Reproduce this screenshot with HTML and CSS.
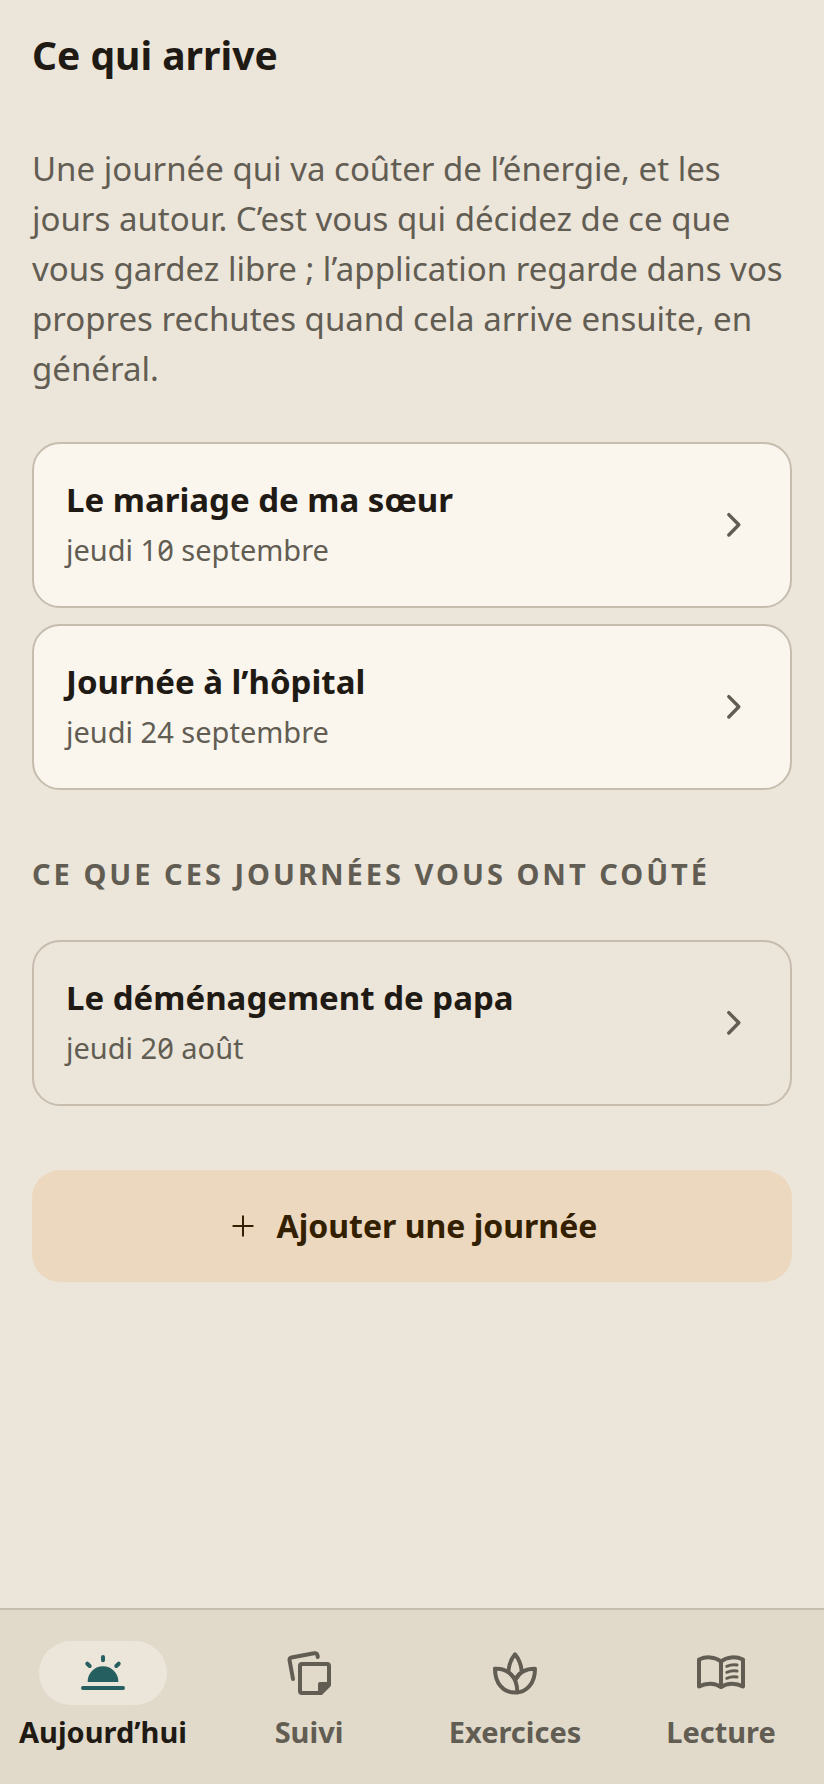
FILE: index.html
```html
<!DOCTYPE html>
<html lang="fr">
<head>
  <meta charset="UTF-8">
  <meta name="viewport" content="width=device-width, initial-scale=1.0">
  <title>Ce qui arrive</title>
  <link rel="stylesheet" href="styles.css">
</head>
<body>
  <main class="page">
    <h1>Ce qui arrive</h1>

    <p class="intro">Une journée qui va coûter de l’énergie, et les jours autour. C’est vous qui décidez de ce que vous gardez libre ; l’application regarde dans vos propres rechutes quand cela arrive ensuite, en général.</p>

    <!-- Upcoming days -->
    <div class="card-list">
      <a class="card" href="#mariage">
        <span class="card-text">
          <span class="card-title">Le mariage de ma sœur</span>
          <span class="card-date">jeudi 10 septembre</span>
        </span>
        <svg class="chevron" viewBox="0 0 48 48" aria-hidden="true"><path d="M18.8 13.6L28.8 23.8L18.8 34"/></svg>
      </a>
      <a class="card" href="#hopital">
        <span class="card-text">
          <span class="card-title">Journée à l’hôpital</span>
          <span class="card-date">jeudi 24 septembre</span>
        </span>
        <svg class="chevron" viewBox="0 0 48 48" aria-hidden="true"><path d="M18.8 13.6L28.8 23.8L18.8 34"/></svg>
      </a>
    </div>

    <!-- Past days -->
    <h2>Ce que ces journées vous ont coûté</h2>
    <div class="card-list">
      <a class="card card-past" href="#demenagement">
        <span class="card-text">
          <span class="card-title">Le déménagement de papa</span>
          <span class="card-date">jeudi 20 août</span>
        </span>
        <svg class="chevron" viewBox="0 0 48 48" aria-hidden="true"><path d="M18.8 13.6L28.8 23.8L18.8 34"/></svg>
      </a>
    </div>

    <button class="add-btn" type="button">
      <svg class="plus" viewBox="0 0 32 32" aria-hidden="true"><path d="M16 6.3V25.7M6.3 16H25.7"/></svg>
      Ajouter une journée
    </button>
  </main>

  <!-- Bottom navigation -->
  <nav class="tabs">
    <a class="tab active" href="#aujourdhui" aria-current="page">
      <span class="tab-icon">
        <svg viewBox="0 0 48 48" aria-hidden="true">
          <path d="M24 8V11.3M8.3 14.7L10.7 17M39.7 14.7L37.3 17M4 39H44"/>
          <path class="solid" d="M8.700 33V32.6a15.3 15.3 0 0 1 30.6 0V33Z"/>
        </svg>
      </span>
      Aujourd’hui
    </a>
    <a class="tab" href="#suivi">
      <span class="tab-icon">
        <svg viewBox="0 0 48 48" aria-hidden="true">
          <path d="M8 30L4.600 11.5Q4 9 6.5 8.5L29 4.3Q32 3.6 32.5 6.5L32.8 8"/>
          <path d="M36 44H17a2 2 0 0 1-2-2V17a2 2 0 0 1 2-2H42a2 2 0 0 1 2 2V36Z"/>
          <path class="solid" d="M33 35a2 2 0 0 1 2-2H45V36L36 45H33Z"/>
        </svg>
      </span>
      Suivi
    </a>
    <a class="tab" href="#exercices">
      <span class="tab-icon">
        <svg viewBox="0 0 48 48" aria-hidden="true">
          <path d="M4 19.7C16 19 26.5 27 26.3 43.5"/>
          <path d="M4 19.7C4 34 12 43.6 24 43.6S44 34 44 19.7C35 19.7 28 23 24.5 30.5"/>
          <path d="M17.3 22.5C18 15.5 20.5 9.5 24 5.3C27.5 9.5 30 15 30.7 22"/>
          <path d="M20 25.5L24.5 30.3L28.5 25"/>
        </svg>
      </span>
      Exercices
    </a>
    <a class="tab" href="#lecture">
      <span class="tab-icon">
        <svg viewBox="0 0 48 48" aria-hidden="true">
          <path d="M24 12.5C18 7.5 9 7.3 2 10.5V37.5C9 33.5 18 33.7 24 38C30 33.7 39 33.5 46 37.5V10.5C39 7.3 30 7.5 24 12.5V38"/>
          <path class="line" d="M29.8 17.3Q35 15 40 16M29.8 23.3Q35 21 40 22M29.8 29.3Q35 27 40 28"/>
        </svg>
      </span>
      Lecture
    </a>
  </nav>
</body>
</html>
```
FILE: styles.css
```css
/* Universal Styles */
* {
  box-sizing: border-box;
}

body {
  font-family: 'Noto Sans', sans-serif;
  font-variant-numeric: slashed-zero;
  margin: 0;
  background: #ece5da;
  color: #1f1a14;
  display: flex;
  flex-direction: column;
  min-height: 100vh;
}

a {
  color: inherit;
  text-decoration: none;
}

svg {
  fill: none;
  stroke: currentColor;
  stroke-linecap: round;
  stroke-linejoin: round;
}

/* Page content */
.page {
  flex: 1;
  display: flex;
  flex-direction: column;
  padding: 28px 32px 32px;
}

h1 {
  font-size: 39px;
  line-height: 54px;
  font-weight: 700;
  margin: 0 0 62px;
}

.intro {
  font-size: 33px;
  line-height: 50px;
  color: #625d53;
  margin: 0 0 48px;
}

h2 {
  font-size: 29px;
  line-height: 40px;
  font-weight: 700;
  letter-spacing: 3px;
  text-transform: uppercase;
  color: #625d53;
  margin: 64px 0 46px;
}

/* Cards */
.card-list {
  display: flex;
  flex-direction: column;
  gap: 16px;
}

.card {
  display: flex;
  align-items: center;
  justify-content: space-between;
  padding: 31px 32px;
  border: 2px solid #c6bdae;
  border-radius: 28px;
  background: #faf5ed;
}

.card-past {
  background: transparent;
}

.card-text {
  display: flex;
  flex-direction: column;
}

.card-title {
  font-size: 33px;
  line-height: 50px;
  font-weight: 700;
}

.card-date {
  font-size: 29px;
  line-height: 50px;
  color: #625d53;
}

.chevron {
  flex: none;
  width: 48px;
  height: 48px;
  color: #625d53;
  stroke-width: 3.4;
}

/* Add button */
.add-btn {
  display: flex;
  align-items: center;
  justify-content: center;
  gap: 18px;
  margin-top: 64px;
  padding: 32px;
  border: none;
  border-radius: 28px;
  background: #ecd8bf;
  color: #332000;
  font-family: inherit;
  font-size: 32px;
  line-height: 48px;
  font-weight: 700;
  cursor: pointer;
}

.plus {
  width: 32px;
  height: 32px;
  stroke-width: 2;
}

/* Bottom navigation */
.tabs {
  position: sticky;
  bottom: 0;
  display: grid;
  grid-template-columns: repeat(4, 1fr);
  padding: 31px 0 33px;
  border-top: 2px solid #c6bdae;
  background: #e1dacb;
}

.tab {
  display: flex;
  flex-direction: column;
  align-items: center;
  gap: 8px;
  font-size: 29px;
  line-height: 38px;
  font-weight: 700;
  color: #625d53;
}

.tab-icon {
  display: flex;
  align-items: center;
  justify-content: center;
  width: 128px;
  height: 64px;
  border-radius: 32px;
}

.tab-icon svg {
  width: 48px;
  height: 48px;
  stroke-width: 4;
}

.tab-icon .solid {
  fill: currentColor;
  stroke: none;
}

.tab-icon .line {
  stroke-width: 3;
}

.active {
  color: #1f1a14;
}

.active .tab-icon {
  background: #ece5da;
  color: #265f5f;
}
```
